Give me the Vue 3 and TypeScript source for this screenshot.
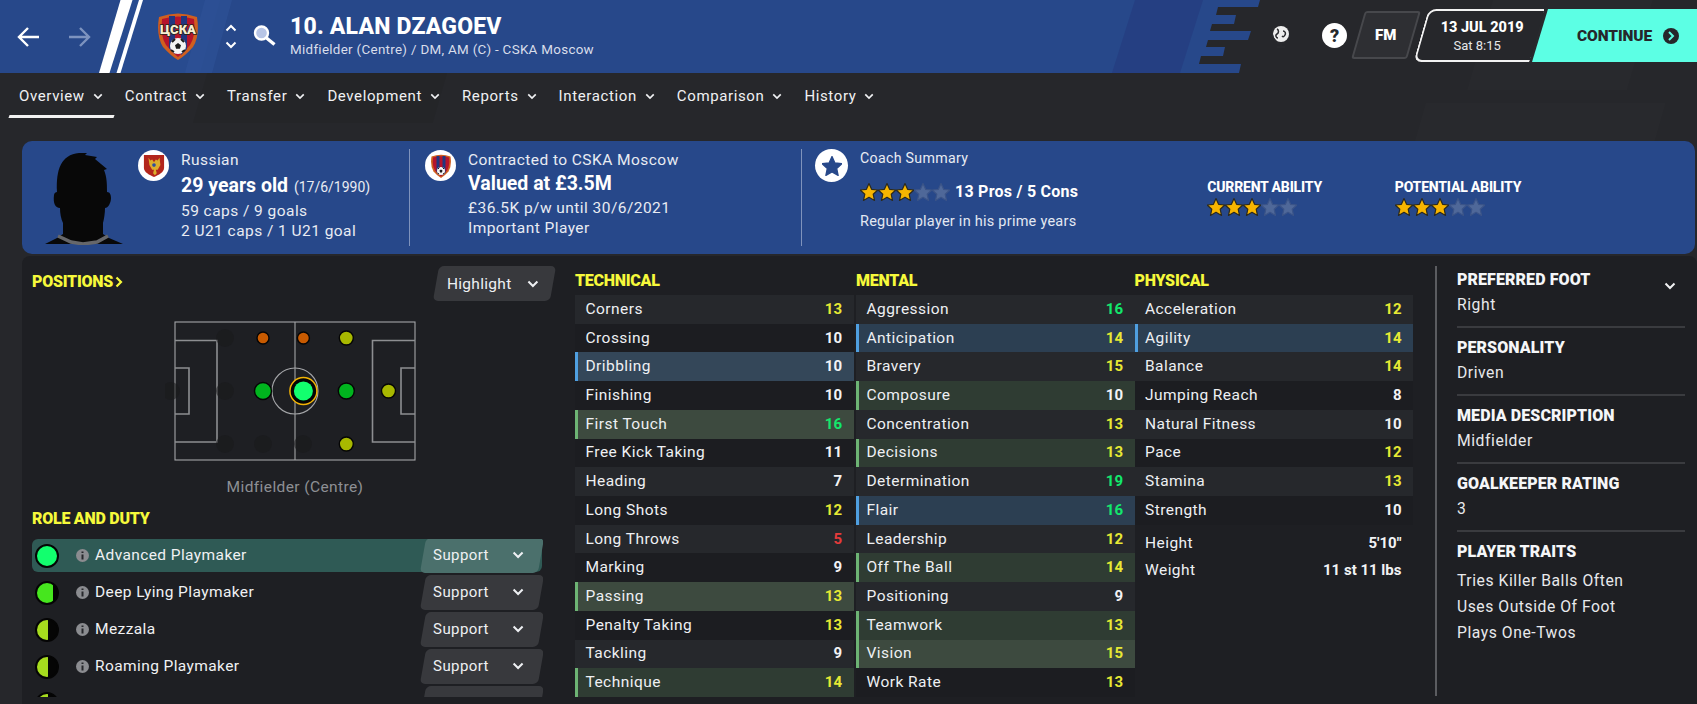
<script setup lang="ts">
type Tone = '' | 'blue' | 'green'
interface Attr { name: string; value: number; tone: Tone }
const a = (name: string, value: number, tone: Tone = ''): Attr => ({ name, value, tone })

const tabs = ['Overview', 'Contract', 'Transfer', 'Development', 'Reports', 'Interaction', 'Comparison', 'History']

const groups: { title: string; rows: Attr[] }[] = [
  {
    title: 'TECHNICAL',
    rows: [
      a('Corners', 13), a('Crossing', 10), a('Dribbling', 10, 'blue'), a('Finishing', 10),
      a('First Touch', 16, 'green'), a('Free Kick Taking', 11), a('Heading', 7), a('Long Shots', 12),
      a('Long Throws', 5), a('Marking', 9), a('Passing', 13, 'green'), a('Penalty Taking', 13),
      a('Tackling', 9), a('Technique', 14, 'green'),
    ],
  },
  {
    title: 'MENTAL',
    rows: [
      a('Aggression', 16), a('Anticipation', 14, 'blue'), a('Bravery', 15), a('Composure', 10, 'green'),
      a('Concentration', 13), a('Decisions', 13, 'green'), a('Determination', 19), a('Flair', 16, 'blue'),
      a('Leadership', 12), a('Off The Ball', 14, 'green'), a('Positioning', 9), a('Teamwork', 13, 'green'),
      a('Vision', 15, 'green'), a('Work Rate', 13),
    ],
  },
  {
    title: 'PHYSICAL',
    rows: [
      a('Acceleration', 12), a('Agility', 14, 'blue'), a('Balance', 14), a('Jumping Reach', 8),
      a('Natural Fitness', 10), a('Pace', 12), a('Stamina', 13), a('Strength', 10),
    ],
  },
]

const valueClass = (v: number) => (v >= 16 ? 'v-high' : v >= 12 ? 'v-mid' : v <= 5 ? 'v-low' : '')

const roles = [
  { name: 'Advanced Playmaker', color: '#12ff6e', fill: 1, on: true },
  { name: 'Deep Lying Playmaker', color: '#46e61e', fill: 0.78, on: false },
  { name: 'Mezzala', color: '#a6dc1e', fill: 0.55, on: false },
  { name: 'Roaming Playmaker', color: '#a6dc1e', fill: 0.55, on: false },
  { name: '', color: '#a6dc1e', fill: 0.55, on: false },
]

const facts = [
  { label: 'PREFERRED FOOT', lines: ['Right'] },
  { label: 'PERSONALITY', lines: ['Driven'] },
  { label: 'MEDIA DESCRIPTION', lines: ['Midfielder'] },
  { label: 'GOALKEEPER RATING', lines: ['3'] },
  { label: 'PLAYER TRAITS', lines: ['Tries Killer Balls Often', 'Uses Outside Of Foot', 'Plays One-Twos'] },
]

const emptyDots = [[50, 16], [-4, 69], [50, 69], [50, 122], [88, 122], [128, 122]]
const dots = [
  { x: 88, y: 16, r: 6, c: '#c85a00' },
  { x: 128.4, y: 16, r: 6, c: '#c85a00' },
  { x: 171.3, y: 16, r: 7, c: '#a8b800' },
  { x: 88, y: 69, r: 8.5, c: '#00b41e' },
  { x: 171.3, y: 69, r: 8, c: '#00b41e' },
  { x: 213.5, y: 69, r: 7, c: '#a8b800' },
  { x: 171.3, y: 122, r: 7, c: '#a8b800' },
]
const stars = [0, 1, 2, 3, 4]
</script>

<template>
  <div class="screen">
    <svg class="defs" aria-hidden="true">
      <symbol id="chev" viewBox="0 0 12 8"><polyline points="1.5,1.5 6,6 10.5,1.5" fill="none" stroke="currentColor" stroke-width="2" /></symbol>
      <symbol id="star" viewBox="1 1 18 18"><polygon points="10,1.5 12.6,7.3 18.8,8 14.2,12.2 15.5,18.4 10,15.3 4.5,18.4 5.8,12.2 1.2,8 7.4,7.3" stroke-width="1.2" stroke-linejoin="round" /></symbol>
      <symbol id="crest" viewBox="0 0 44 48">
        <path d="M3 5 Q22 -2 41 5 Q44 24 37 35 Q29 44 22 48 Q15 44 7 35 Q0 24 3 5Z" fill="#cf5f1f" />
        <path d="M6 7 Q22 2 38 7 Q40 24 34 33 Q27 41 22 45 Q17 41 10 33 Q4 24 6 7Z" fill="#b5142c" />
        <path d="M13 4 h6 v38 l-6 -6Z M25 4 h6 v33 l-6 6Z" fill="#22367f" />
        <circle cx="22" cy="34" r="8" fill="#f4f4f4" />
        <path d="M22 31 l3 2.200 -1.100 3.600h-3.800 l-1.100 -3.600Z" fill="#1c1c1c" />
        <path d="M16 30 l3 -3 M28 30 l-3 -3 M15 38 l3 2 M29 38 l-3 2" stroke="#1c1c1c" stroke-width="2" />
      </symbol>
    </svg>

    <div class="bg-shapes" aria-hidden="true">
      <i class="sh s1"></i><i class="sh s2"></i><i class="sh s3"></i><i class="sh s4"></i><i class="sh s5"></i><i class="sh s6"></i>
    </div>

    <header class="topbar">
      <div class="hero">
        <svg class="hero-art" viewBox="0 0 1270 73" width="1270" height="73" aria-hidden="true">
          <polygon points="0,0 1260,0 1258,7 1218,7 1216,15 1236,15 1234,24 1212,24 1210,31 1251,31 1248,40 1208,40 1206,47 1225,47 1223,56 1201,56 1199,64 1241,64 1239,73 0,73" fill="#27488a" />
          <polygon points="132,0 220,0 200,73 110,73" fill="#2a4d92" opacity=".7" />
          <polygon points="205,0 232,0 212,73 185,73" fill="#2f5399" opacity=".55" />
          <polygon points="1135,0 1203,0 1180,73 1112,73" fill="#253f82" />
          <polygon points="120.5,0 132.5,0 109.5,73 99,73" fill="#fff" />
          <polygon points="139,0 143,0 120.5,73 116.5,73" fill="#fff" />
        </svg>
        <svg class="ic-arrow" viewBox="0 0 24 22" width="24" height="22"><path d="M22 11H3M11 2l-9 9 9 9" fill="none" stroke="#fff" stroke-width="2.4" /></svg>
        <svg class="ic-arrow fwd" viewBox="0 0 24 22" width="24" height="22"><path d="M2 11h19M13 2l9 9-9 9" fill="none" stroke="#7d93bf" stroke-width="2.4" /></svg>
        <svg class="crest-big" viewBox="0 0 44 48" width="44" height="48" aria-label="CSKA">
          <use href="#crest" />
          <text x="22" y="22" text-anchor="middle" textLength="36" lengthAdjust="spacingAndGlyphs" class="crest-t">ЦСКА</text>
        </svg>
        <div class="updown">
          <svg class="up" width="12" height="8"><use href="#chev" /></svg>
          <svg width="12" height="8"><use href="#chev" /></svg>
        </div>
        <svg class="search" viewBox="0 0 23 21" width="23" height="21"><circle cx="8.5" cy="8" r="6.5" fill="#b7c5e6" stroke="#fff" stroke-width="2.4" /><path d="M13.5 13l8 6.5" stroke="#fff" stroke-width="3.4" /></svg>
        <div class="who">
          <div class="name">10. ALAN DZAGOEV</div>
          <div class="sub">Midfielder (Centre) / DM, AM (C) - CSKA Moscow</div>
        </div>
      </div>
      <div class="tools">
        <svg class="globe" viewBox="0 0 20 23" width="20" height="23"><circle cx="10" cy="9" r="8" fill="#eee" /><path d="M6 4c2 1 2 4 0 5s-1 4 1 4M12 6c2 0 3 2 2 4s-2 2-3 1M3 2c-3 5-2 11 2 14M14 18H6M10 18v3M6 22h8" fill="none" stroke="#2a2b2f" stroke-width="1.5" /></svg>
        <div class="help">?</div>
        <div class="fm"><span>FM</span></div>
        <div class="clock">
          <div class="date">13 JUL 2019</div>
          <div class="time">Sat 8:15</div>
        </div>
        <div class="cont">
          <span>CONTINUE</span>
          <svg viewBox="0 0 16 16" width="16" height="16"><circle cx="8" cy="8" r="8" fill="#26272b" /><path d="M6 4l4 4-4 4" fill="none" stroke="#5cffe4" stroke-width="2" /></svg>
        </div>
      </div>
    </header>

    <nav class="tabs">
      <div v-for="(t, i) in tabs" :key="t" class="tab" :class="{ active: i === 0 }">
        {{ t }}
        <svg width="10" height="7"><use href="#chev" /></svg>
      </div>
    </nav>

    <section class="card">
      <svg class="face" viewBox="0 0 80 92" width="80" height="92" aria-hidden="true">
        <path d="M0 91L12 85L18 81L18 70C16 66 15 60 15 55C10 55 8 50 9 42C9 40 11 39 12 39C11 16 16 2 34 0L42 0L40 2L52 4L50 6L62 16L59 17C62 24 62 32 62 39C65 39 66 42 66 45C66 50 63 55 60 55C60 60 59 66 58 70L58 81L64 85L78 91Z" fill="#080808" />
        <path d="M13 83L26 89L38 91L52 89L63 83" fill="none" stroke="#66676a" stroke-width="3.5" />
      </svg>
      <div class="info bio">
        <div class="oval"><svg viewBox="0 0 24 26" width="22" height="24"><path d="M1 1h22v14c0 5-6 8-11 10C7 23 1 20 1 15Z" fill="#b3261c" /><path d="M6 4l2 3 2-1 2 3 2-3 2 1 2-3 1 8-3 5-2 0 1 4-2 2-2-2 1-4-2 0-3-5Z" fill="#dcae2c" /><circle cx="12" cy="12" r="2" fill="#2c4fa0" /></svg></div>
        <div class="lines">
          <div class="l1">Russian</div>
          <div class="big">29 years old <small>(17/6/1990)</small></div>
          <div class="l3">59 caps / 9 goals</div>
          <div class="l4">2 U21 caps / 1 U21 goal</div>
        </div>
      </div>
      <div class="info contract">
        <div class="oval"><svg viewBox="0 0 44 48" width="22" height="24"><use href="#crest" /></svg></div>
        <div class="lines">
          <div class="l1">Contracted to CSKA Moscow</div>
          <div class="big tight">Valued at £3.5M</div>
          <div class="l3">£36.5K p/w until 30/6/2021</div>
          <div class="l4">Important Player</div>
        </div>
      </div>
      <div class="info coach">
        <div class="oval round"><svg width="20" height="20" class="navy"><use href="#star" /></svg></div>
        <div class="lines">
          <div class="l1 cs">Coach Summary</div>
          <div class="prosline">
            <span class="stars"><svg v-for="s in stars" :key="s" :class="s < 3 ? 'st-on' : 'st-off'" width="18" height="18"><use href="#star" /></svg></span>
            <b>13 Pros / 5 Cons</b>
          </div>
          <div class="reg">Regular player in his prime years</div>
        </div>
        <div class="ability cur">
          <div class="ab-t">CURRENT ABILITY</div>
          <span class="stars"><svg v-for="s in stars" :key="s" :class="s < 3 ? 'st-on' : 'st-off'" width="18" height="18"><use href="#star" /></svg></span>
        </div>
        <div class="ability">
          <div class="ab-t">POTENTIAL ABILITY</div>
          <span class="stars"><svg v-for="s in stars" :key="s" :class="s < 3 ? 'st-on' : 'st-off'" width="18" height="18"><use href="#star" /></svg></span>
        </div>
      </div>
    </section>

    <main class="panel">
      <div class="left">
        <div class="pos-head">
          <h3>POSITIONS<svg class="gt" viewBox="0 0 8 12" width="8" height="12"><path d="M1.5 1.5L6 6l-4.5 4.5" fill="none" stroke="#f6f93b" stroke-width="2.2" /></svg></h3>
          <div class="drop high"><span>Highlight</span><svg width="12" height="8"><use href="#chev" /></svg></div>
        </div>
        <svg class="pitch" viewBox="-10 -1 260 140" width="260" height="140">
          <g fill="none" stroke="#a4a5a8" stroke-width="1.1">
            <rect x="0" y="0" width="240" height="138" />
            <path d="M120 0v138" />
            <circle cx="120" cy="69" r="23" />
          </g>
          <g fill="none" stroke="#8d8e91" stroke-width="1.6">
            <path d="M0 18.5h42v101.5H0M0 46h14v46H0M240 18.5h-42.500v101.500h42.500M240 46h-14v46h14" />
          </g>
          <circle v-for="(d, i) in emptyDots" :key="i" :cx="d[0]" :cy="d[1]" r="9" fill="#19191c" opacity=".55" />
          <circle v-for="(d, i) in dots" :key="'d' + i" :cx="d.x" :cy="d.y" :r="d.r" :fill="d.c" stroke="#050505" stroke-width="1.4" />
          <circle cx="128.400" cy="69" r="13.500" fill="#050505" stroke="#f3b405" stroke-width="1.5" />
          <circle cx="128.400" cy="69" r="9.500" fill="#12ff6e" />
        </svg>
        <div class="pos-name">Midfielder (Centre)</div>
        <h3 class="role-h">ROLE AND DUTY</h3>
        <div class="roles">
          <div class="role-list">
            <div v-for="r in roles" :key="r.name" class="role" :class="{ on: r.on }">
              <i class="disc" :style="{ background: `linear-gradient(90deg, ${r.color} ${r.fill * 100}%, #050505 ${r.fill * 100}%)` }"></i>
              <template v-if="r.name">
                <svg class="inf" viewBox="0 0 13 13" width="13" height="13"><circle cx="6.500" cy="6.500" r="6.500" fill="#8b8c90" /><path d="M6.500 2.500v1.600M6.500 5.500v5" stroke="#26272b" stroke-width="2" /></svg>
                <span class="role-n">{{ r.name }}</span>
              </template>
              <div class="drop duty"><span v-if="r.name">Support</span><svg v-if="r.name" width="12" height="8"><use href="#chev" /></svg></div>
            </div>
          </div>
          <i class="scroll"></i>
        </div>
      </div>

      <div class="attrs">
        <div v-for="g in groups" :key="g.title" class="group">
          <h3>{{ g.title }}</h3>
          <div v-for="(r, i) in g.rows" :key="r.name" class="row" :class="[r.tone, i % 2 === 0 ? 'odd' : 'even']">
            <span>{{ r.name }}</span><b :class="valueClass(r.value)">{{ r.value }}</b>
          </div>
          <div v-if="g.title === 'PHYSICAL'" class="measures">
            <div class="row plain"><span>Height</span><b>5'10"</b></div>
            <div class="row plain"><span>Weight</span><b>11 st 11 lbs</b></div>
          </div>
        </div>
      </div>

      <aside class="facts">
        <svg class="facts-chev" width="12" height="8"><use href="#chev" /></svg>
        <div v-for="f in facts" :key="f.label" class="fact">
          <h4>{{ f.label }}</h4>
          <p v-for="l in f.lines" :key="l">{{ l }}</p>
        </div>
      </aside>
    </main>
  </div>
</template>

<style>
html, body { margin: 0; background: #26272b; }
</style>

<style scoped>
.screen {
  position: relative;
  width: 1697px;
  height: 704px;
  overflow: hidden;
  background: #26272b;
  color: #eef0f3;
  font-family: Roboto, "Liberation Sans", sans-serif;
  font-size: 15px;
}
.defs { position: absolute; width: 0; height: 0; }
.bg-shapes { position: absolute; inset: 0; pointer-events: none; }
.sh { position: absolute; display: block; transform: skewX(-16deg); background: rgba(255,255,255,.013); }
.s1 { left: 1480px; top: 0; width: 160px; height: 90px; }
.s2 { left: 1420px; top: 103px; width: 240px; height: 40px; }
.s3 { left: 200px; top: 73px; width: 240px; height: 50px; background: rgba(0,0,0,.05); }
.s4 { left: 1560px; top: 470px; width: 110px; height: 230px; }
.s5 { left: 130px; top: 260px; width: 260px; height: 50px; }
.s6 { left: 600px; top: 420px; width: 500px; height: 280px; }

.topbar { position: relative; display: flex; height: 73px; justify-content: space-between; }
.hero { position: relative; display: flex; align-items: center; width: 1270px; height: 73px; }
.hero-art { position: absolute; left: 0; top: 0; }
.ic-arrow { position: relative; margin-left: 17px; }
.ic-arrow.fwd { margin-left: 26px; }
.crest-big { position: relative; margin-left: 65px; margin-top: -1px; }
.crest-t { font: 900 13.500px Roboto, sans-serif; fill: #f6edd2; stroke: #2a2118; stroke-width: 1.6px; paint-order: stroke; }
.updown { position: relative; display: flex; flex-direction: column; gap: 9px; margin-left: 25px; color: #fff; }
.updown svg { display: block; }
.updown .up { transform: rotate(180deg); }
.search { position: relative; margin-left: 16px; margin-top: -2px; }
.who { position: relative; margin-left: 14px; margin-top: -2px; }
.name { font-size: 23px; font-weight: 800; color: #fff; line-height: 26px; letter-spacing: .2px; }
.sub { font-size: 13.400px; line-height: 17px; color: #d9deea; letter-spacing: .3px; margin-top: 1px; }

.tools { position: relative; display: flex; align-items: flex-start; }
.globe { margin: 25px 0 0 3px; }
.help { width: 25px; height: 25px; margin: 23px 0 0 31px; border-radius: 50%; background: #fff; color: #26272b; font-weight: 900; font-size: 18px; line-height: 25px; text-align: center; }
.fm { width: 56px; height: 48px; margin: 11px 0 0 11px; box-sizing: border-box; border: 2px solid #47484c; border-radius: 3px; background: #2e2f33; transform: skewX(-16deg); display: flex; align-items: center; justify-content: center; }
.fm span { transform: skewX(16deg); font-weight: 900; font-size: 15px; color: #fff; }
.clock { width: 116px; height: 53px; margin: 9px 0 0 2px; box-sizing: border-box; border: 2px solid #f2f2f2; border-right: 0; border-radius: 8px 0 0 8px; transform: skewX(-16deg); background: #26272b; text-align: center; position: relative; left: 5px; }
.date { transform: skewX(16deg); font-weight: 800; font-size: 14.500px; color: #fff; line-height: 20px; margin-top: 7px; }
.time { transform: skewX(16deg); font-size: 13px; color: #e6e7e9; line-height: 17px; margin-top: -1px; }
.cont { display: flex; align-items: center; gap: 11px; width: 165px; height: 53px; margin-top: 9px; padding-left: 45px; box-sizing: border-box; background: #5cffe4; clip-path: polygon(16px 0, 100% 0, 100% 100%, 0 100%); color: #26272b; font-weight: 900; font-size: 15.500px; letter-spacing: -.1px; }

.tabs { position: relative; display: flex; height: 48px; padding-left: 8px; }
.tab { position: relative; display: flex; align-items: center; gap: 8px; height: 46px; padding: 0 11px 0 11px; font-size: 15px; letter-spacing: .62px; color: #f0f1f3; }
.tab svg { margin-top: 1px; }
.tab.active::after { content: ""; position: absolute; left: 1px; right: 0; bottom: 1px; height: 3px; background: #f2f2f2; transform: skewX(-20deg); }

.card { position: relative; display: flex; align-items: stretch; height: 113px; margin: 20px 2px 0 22px; border-radius: 10px; background: #27488a; }
.face { margin: 12px 0 0 23px; flex: none; }
.info { display: flex; margin-top: 8px; height: 97px; box-sizing: border-box; }
.bio { width: 271px; margin-left: 13px; }
.contract { width: 392px; border-left: 1px solid #7f93bc; padding-left: 15px; }
.coach { flex: 1; border-left: 1px solid #7f93bc; padding-left: 13px; }
.oval { flex: none; display: flex; align-items: center; justify-content: center; width: 31px; height: 31px; margin-top: 1px; border-radius: 50%; background: #fff; }
.oval.round { width: 33px; height: 33px; margin-top: 0; }
.lines { margin-left: 12px; white-space: nowrap; }
.l1 { font-size: 15.500px; line-height: 20px; margin-top: 1px; letter-spacing: .45px; color: #e9ecf3; }
.big { font-size: 19.500px; font-weight: 700; line-height: 26px; margin-top: 3px; color: #fff; }
.big small { font-size: 14px; font-weight: 400; color: #e9ecf3; margin-left: 1px; }
.big.tight { margin-top: 1px; }
.l3 { font-size: 15.500px; line-height: 20px; margin-top: 1px; letter-spacing: .45px; color: #e9ecf3; }
.l4 { font-size: 15.500px; line-height: 20px; letter-spacing: .45px; color: #e9ecf3; }
.navy { fill: #27488a; stroke: #27488a; }
.cs { margin-top: -1px; margin-left: 0; font-size: 14.200px; letter-spacing: .3px; }
.prosline { display: flex; align-items: center; gap: 5px; margin-top: 14px; }
.prosline b { font-size: 16px; font-weight: 700; letter-spacing: .25px; color: #fff; }
.stars { display: flex; }
.stars svg { display: block; }
.st-on { fill: #f7b500; stroke: #2b2a1f; }
.st-off { fill: #4f6899; stroke: #3b5488; }
.reg { font-size: 14.500px; line-height: 18px; margin-top: 12px; letter-spacing: .25px; color: #e3e8f2; }
.ability { width: 187.500px; margin-top: 29px; }
.ability.cur { margin-left: 129px; }
.ab-t { font-size: 14px; font-weight: 800; line-height: 18px; color: #fff; letter-spacing: -.2px; white-space: nowrap; }
.ability .stars { margin-top: 2px; margin-left: 0; }

.panel { position: relative; display: flex; height: 449px; margin: 2px 0 0 22px; width: 1675px; background: #1e1f23; border-radius: 8px 8px 0 0; }
h3 { margin: 0; color: #f6f93b; font-size: 16px; font-weight: 900; letter-spacing: -.25px; line-height: 18px; }
.left { width: 521px; padding: 10px 0 0 10px; box-sizing: border-box; flex: none; }
.pos-head { display: flex; justify-content: space-between; height: 35px; margin-right: -9.500px; }
.pos-head h3 { margin-top: 7px; display: flex; gap: 2px; align-items: center; height: 18px; }
.drop { display: flex; align-items: center; justify-content: space-between; box-sizing: border-box; background: #38393d; border-radius: 5px; transform: skewX(-10deg); }
.drop > * { transform: skewX(10deg); }
.high { width: 117px; height: 35px; padding: 0 14px 0 11px; font-size: 15.500px; letter-spacing: .3px; }
.pitch { display: block; margin: 20px 0 0 133px; }
.pos-name { width: 240px; margin: 16px 0 0 143px; text-align: center; color: #8d8f94; font-size: 15.500px; letter-spacing: .4px; line-height: 20px; white-space: nowrap; }
.role-h { margin-top: 13px; }
.roles { display: flex; margin-top: 11px; height: 158px; overflow: hidden; }
.role-list { width: 510px; flex: none; }
.role { display: flex; align-items: center; height: 33px; margin-bottom: 4px; border-radius: 6px; position: relative; }
.role.on { background: #2f5a55; }
.disc { display: block; flex: none; width: 20px; height: 20px; margin-left: 3px; border: 2.500px solid #050505; border-radius: 50%; }
.inf { margin-left: 17px; flex: none; }
.role-n { margin: -1px 0 0 6px; font-size: 15.500px; letter-spacing: .4px; color: #f0f1f3; }
.duty { position: absolute; right: 1px; top: -1px; width: 118px; height: 35px; padding: 0 17px 2px 10px; font-size: 15px; letter-spacing: .4px; }
.role.on .duty { background: #4b706c; }
.scroll { display: block; width: 5px; height: 78px; margin: 2px 0 0 6px; background: #3e3f43; border-radius: 3px; }

.attrs { display: flex; gap: 2.500px; width: 872.500px; flex: none; box-sizing: border-box; padding: 10px 0 0 32px; }
.group { width: 278.500px; flex: none; }
.group:last-child { margin-left: -2.500px; }
.group h3 { height: 29px; line-height: 29px; }
.row { display: flex; align-items: center; justify-content: space-between; height: 28.730px; box-sizing: border-box; padding: 0 11.500px 1px 7.500px; border-left: 3px solid transparent; font-size: 15.500px; letter-spacing: .45px; }
.row.odd { background: #26282c; }
.row.even { background: #1c1d21; }
.row.blue { border-left-color: #4f9fe0; }
.row.blue.odd { background: #344759; }
.row.blue.even { background: #2c3f52; }
.row.green { border-left-color: #6db374; }
.row.green.odd { background: #3d4a3f; }
.row.green.even { background: #2f3c33; }
.row b { font-weight: 700; font-size: 15px; letter-spacing: 0; color: #f2f3f5; }
b.v-high { color: #13e86c; }
b.v-mid { color: #e6e934; }
b.v-low { color: #e53b3b; }
.measures { margin-top: 5px; }
.row.plain { background: none; height: 27px; }
.row.plain b { font-weight: 700; }

.facts { position: relative; margin-left: 19.500px; width: 252px; box-sizing: border-box; padding-left: 20px; border-left: 2px solid #5b5c60; height: 430px; margin-top: 10px; }
.facts-chev { position: absolute; left: 227px; top: 16px; color: #f0f1f3; }
.fact { height: 68px; box-sizing: border-box; padding-top: 11px; border-bottom: 2px solid #3a3b3f; margin-right: 2px; white-space: nowrap; }
.fact:first-of-type { height: 62px; padding-top: 5px; }
.fact:last-child { border-bottom: 0; }
.fact h4 { margin: 0; color: #f5f6f8; font-size: 16px; font-weight: 900; letter-spacing: .1px; line-height: 18px; }
.fact p { margin: 7px 0 0; font-size: 15.700px; letter-spacing: .55px; line-height: 18px; color: #e8e9ec; }
.fact p + p { margin-top: 8px; }
.fact:last-child p:first-of-type { margin-top: 11px; }
</style>
